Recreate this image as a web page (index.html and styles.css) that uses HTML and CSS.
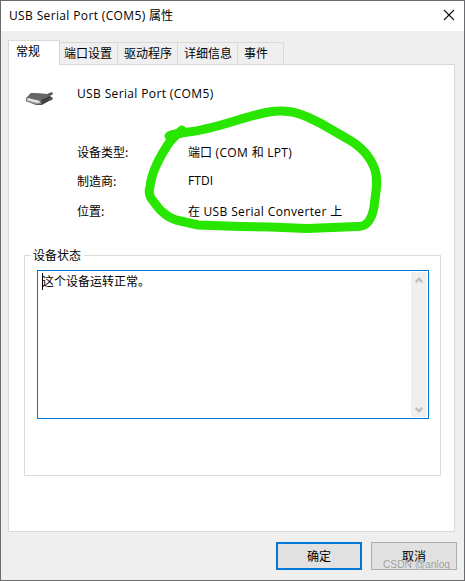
FILE: index.html
```html
<!DOCTYPE html>
<html lang="zh-CN">
<head>
<meta charset="utf-8">
<title>USB Serial Port (COM5) 属性</title>
<link rel="stylesheet" href="styles.css">
</head>
<body>
<div class="window">
  <header class="titlebar">
    <h1 class="title"><span class="latin">USB Serial Port (COM5) </span>属性</h1>
    <svg class="close" width="12" height="12" viewBox="0 0 12 12"><path d="M1 1L11 11M11 1L1 11" stroke="#111" stroke-width="1.1" fill="none"/></svg>
  </header>
  <nav class="tabs">
    <div class="tab active">常规</div>
    <div class="tab w58">端口设置</div>
    <div class="tab w60">驱动程序</div>
    <div class="tab w60">详细信息</div>
    <div class="tab w46">事件</div>
  </nav>
  <main class="panel">
    <div class="device">
      <svg class="device-icon" width="30" height="18" viewBox="0 0 30 18">
        <path d="M2 8L7 3L23 4L28 2L29 4L26 6L29 8L28 10L25 11L18 15L12 15L2 11Z" fill="#555"/>
        <path d="M7 3L23 4L26 6L16 10L4 7Z" fill="#666"/>
        <path d="M3 7.500L16 10.500L17 13.500L12 14L2 11Z" fill="#bcbcbc" stroke="#777" stroke-width=".8"/>
        <path d="M4 9L15 12" stroke="#eee" stroke-width="1.3"/>
        <path d="M18 11L26 7M18 13L25 10" stroke="#333" stroke-width="1.2"/>
      </svg>
      <span class="latin">USB Serial Port (COM5)</span>
    </div>
    <div class="details">
      <span>设备类型:</span><span>端口<span class="latin"> (COM </span>和<span class="latin"> LPT)</span></span>
      <span>制造商:</span><span class="latin plain">FTDI</span>
      <span>位置:</span><span>在<span class="latin"> USB Serial Converter </span>上</span>
    </div>
    <section class="group">
      <h2 class="legend">设备状态</h2>
      <div class="status">
        <div class="status-text"><i class="caret"></i>这个设备运转正常。</div>
        <div class="scrollbar">
          <svg width="8" height="7" viewBox="0 0 8 7"><path d="M.8 5.2L4 1.8L7.2 5.2" fill="none" stroke="#bfbfbf" stroke-width="2.3"/></svg>
          <svg width="8" height="7" viewBox="0 0 8 7"><path d="M.8 1.8L4 5.2L7.2 1.8" fill="none" stroke="#bfbfbf" stroke-width="2.3"/></svg>
        </div>
      </div>
    </section>
  </main>
  <footer class="actions">
    <button class="button primary">确定</button>
    <button class="button">取消</button>
  </footer>
  <svg class="marker" width="465" height="581" viewBox="0 0 465 581">
    <path d="M169 136C178 132 190 133 205 129C229 124 246 116 269 112Q280 110 292 112C304 114 313 120 320 123L346 138C361 146 371 158 375 170C379 182 375 195 374 207C372 218 368 227 357 226.500L307 228.500L270 227L240 226.500L198 225L176 220C163 216 157 206 151 198Q148 193 150 187C151 175 158 160 167 146Q171 139 182 130"/>
    <path d="M171 136L182 133"/>
  </svg>
  <span class="watermark">CSDN @anlog</span>
</div>
</body>
</html>
```
FILE: styles.css
```css
* { box-sizing: border-box; }
body { margin: 0; font: 12px/16px "Noto Sans CJK SC", sans-serif; color: #000; }
h1, h2 { margin: 0; font: inherit; }
.latin { font-family: "Open Sans", sans-serif; letter-spacing: .36px; white-space: pre; }
.plain { letter-spacing: .1px; }
.window { position: relative; width: 465px; height: 581px; background: #efefef; border: 1px solid #6b6a6c; display: flex; flex-direction: column; overflow: hidden; }
.titlebar { height: 30px; flex: none; background: #fff; display: flex; align-items: center; justify-content: space-between; padding: 0 9px 2px 8px; }
.close { display: block; }
.tabs { display: flex; align-items: flex-end; height: 33px; flex: none; padding-left: 7px; }
.tab { height: 22px; border: 1px solid #d9d9d9; border-left: 0; border-bottom: 0; padding: 2px 0 0 4px; white-space: nowrap; }
.tab.active { width: 52px; height: 25px; margin-bottom: -1px; background: #fff; border-left: 1px solid #d9d9d9; padding: 2px 0 0 7px; position: relative; }
.w58 { width: 58px; }
.tab.w60 { width: 60px; padding-left: 6px; }
.tab.w46 { width: 46px; padding-left: 6px; }
.panel { margin: 0 9px 0 7px; height: 468px; flex: none; background: #fff; border: 1px solid #d9d9d9; padding: 20px 13px 0 15px; }
.device { display: flex; align-items: center; height: 18px; gap: 23px; }
.device-icon { margin-top: 9px; }
.details { display: grid; grid-template-columns: 111px 1fr; grid-template-rows: 29px 30px 16px; margin: 41px 0 0 53px; white-space: nowrap; }
.group { margin-top: 36px; height: 221px; border: 1px solid #dcdcdc; padding: 0 11px 0 12px; }
.legend { width: 53px; height: 16px; margin: -9px 0 7px -6px; background: #fff; padding-left: 2px; white-space: nowrap; }
.status { height: 149px; border: 1px solid #0078d7; display: flex; justify-content: space-between; padding: 1px; }
.status-text { display: flex; height: 18px; padding: 1px 0 0 3px; line-height: 16px; }
.caret { width: 1px; height: 17px; background: #000; margin-right: -1px; }
.scrollbar { width: 16px; background: #efefef; display: flex; flex-direction: column; justify-content: space-between; align-items: center; padding: 5px 0 4px; }
.actions { display: flex; gap: 9px; justify-content: flex-end; padding: 10px 7px 0 0; }
.button { width: 86px; height: 28px; border: 1px solid #adadad; background: #e1e1e1; padding: 0 0 1px; font: inherit; color: #000; }
.primary { border: 2px solid #0078d7; }
.marker { position: absolute; left: -1px; top: -1px; pointer-events: none; }
.marker path { fill: none; stroke: #28e600; stroke-width: 9; stroke-linecap: round; stroke-linejoin: round; }
.watermark { position: absolute; left: 382px; top: 557px; font: 10.2px/14px "Liberation Sans", sans-serif; color: #999; text-shadow: 0 0 1px #fff; white-space: nowrap; }
```
